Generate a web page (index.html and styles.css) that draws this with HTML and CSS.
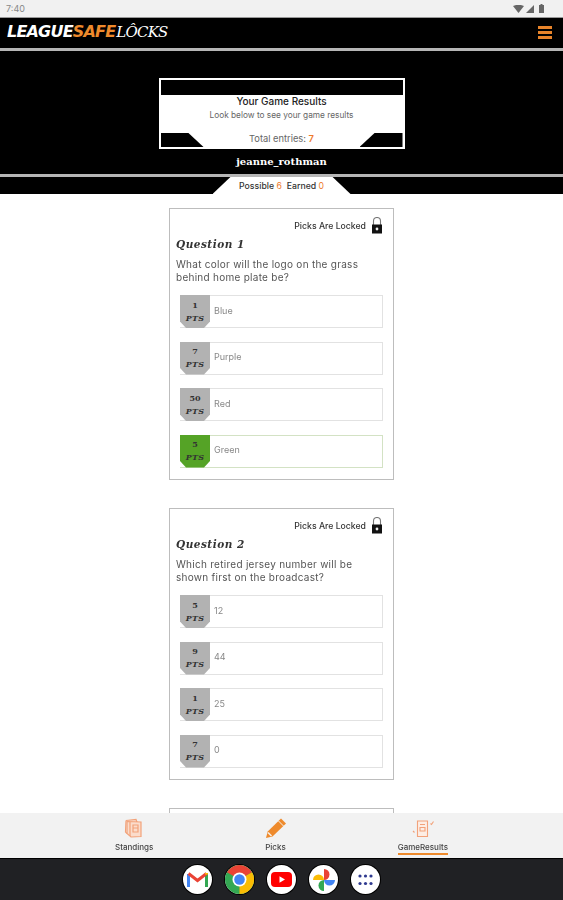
FILE: index.html
```html
<!DOCTYPE html>
<html lang="en">
<head>
<meta charset="utf-8">
<title>LeagueSafe Locks</title>
<link rel="stylesheet" href="styles.css">
</head>
<body>
<div class="app">
  <div class="status">
    <span class="time">7:40</span>
    <span class="status-icons">
      <svg width="11" height="8" viewBox="0 0 11 8"><path d="M0 1 Q5.500-1.500 11 1 L5.500 8Z" fill="#666"/></svg>
      <svg width="8" height="8" viewBox="0 0 8 8"><path d="M8 0V8H0Z" fill="#666"/></svg>
      <svg class="batt" width="5" height="9" viewBox="0 0 5 9"><path d="M1.500 0H3.500V1H5V9H0V1H1.500Z" fill="#666"/></svg>
    </span>
  </div>
  <header class="topbar">
    <div class="logo"><span class="logo-a">LEAGUE</span><span class="logo-b">SAFE</span><span class="logo-c">LÔCKS</span></div>
    <div class="burger"><i></i><i></i><i></i></div>
  </header>
  <section class="hero">
    <div class="hero-card">
      <div class="hero-band"></div>
      <div class="hero-title">Your Game Results</div>
      <div class="hero-sub">Look below to see your game results</div>
      <div class="hero-total">Total entries: <b>7</b></div>
      <span class="corner corner-l"></span>
      <span class="corner corner-r"></span>
    </div>
    <div class="hero-name">jeanne_rothman</div>
  </section>
  <div class="tabband">
    <div class="tab"><span>Possible <em>6</em></span><span>Earned <em>0</em></span></div>
  </div>
  <main class="content">
    <article class="qcard">
      <div class="locked"><span>Picks Are Locked</span>
        <svg width="12" height="17" viewBox="0 0 12 17"><path d="M2.500 8V4a3.500 3.500 0 0 1 7 0v4" fill="none" stroke="#777" stroke-width="1.100"/><rect x="1" y="7.500" width="10" height="9" fill="#111"/><circle cx="6" cy="12" r="1.400" fill="#eee"/></svg>
      </div>
      <h2 class="qtitle">Question 1</h2>
      <p class="qtext">What color will the logo on the grass behind home plate be?</p>
      <div class="opt"><div class="badge"><b>1</b><i>PTS</i></div><span>Blue</span></div>
      <div class="opt"><div class="badge"><b>7</b><i>PTS</i></div><span>Purple</span></div>
      <div class="opt"><div class="badge"><b>50</b><i>PTS</i></div><span>Red</span></div>
      <div class="opt opt-right"><div class="badge"><b>5</b><i>PTS</i></div><span>Green</span></div>
    </article>
    <article class="qcard">
      <div class="locked"><span>Picks Are Locked</span>
        <svg width="12" height="17" viewBox="0 0 12 17"><path d="M2.500 8V4a3.500 3.500 0 0 1 7 0v4" fill="none" stroke="#777" stroke-width="1.100"/><rect x="1" y="7.500" width="10" height="9" fill="#111"/><circle cx="6" cy="12" r="1.400" fill="#eee"/></svg>
      </div>
      <h2 class="qtitle">Question 2</h2>
      <p class="qtext">Which retired jersey number will be shown first on the broadcast?</p>
      <div class="opt"><div class="badge"><b>5</b><i>PTS</i></div><span>12</span></div>
      <div class="opt"><div class="badge"><b>9</b><i>PTS</i></div><span>44</span></div>
      <div class="opt"><div class="badge"><b>1</b><i>PTS</i></div><span>25</span></div>
      <div class="opt"><div class="badge"><b>7</b><i>PTS</i></div><span>0</span></div>
    </article>
    <article class="qcard"></article>
  </main>
  <nav class="bottomnav">
    <div class="navitem">
      <svg width="22" height="22" viewBox="0 0 22 22" fill="none" stroke="#f2a27a" stroke-width="1.200"><path d="M3 3.500L13 2.500 14 5M4 4.500V16.500L8 20 18 19.500V5L4 4.500Z" fill="#fbdccb"/><path d="M7 5V19M10 8H15V15H10ZM10 11H15M3 3.500L2.500 15 4 16.500"/></svg>
      <span>Standings</span>
    </div>
    <div class="navitem">
      <svg width="22" height="22" viewBox="0 0 22 22"><path d="M16 1.500L21 6.500 7.500 19.500 1 21 2.700 14.500Z" fill="#ee8a2c"/><path d="M13.500 4L18.500 9" stroke="#f2f2f2" stroke-width="1"/><path d="M3 15.500L6.500 19" stroke="#f8f0e6" stroke-width="1.600"/></svg>
      <span>Picks</span>
    </div>
    <div class="navitem navitem-on">
      <svg width="24" height="22" viewBox="0 0 24 22" fill="none" stroke="#f2a27a" stroke-width="1.100"><path d="M6.500 4H16.500V19.500H6.500Z" fill="#fdeee5"/><path d="M9 7.500H14M9 10.500H14V14H9Z"/><path d="M19.500 6.500L20.500 7.500 22.500 4.500M2 14L3.500 15.500"/></svg>
      <span>GameResults</span>
    </div>
  </nav>
  <div class="dock">
    <div class="dockapp">
      <svg width="21" height="17" viewBox="0 0 21 17" fill="none"><path d="M1.500 16V3" stroke="#4285f4" stroke-width="3"/><path d="M19.500 16V3" stroke="#34a853" stroke-width="3"/><path d="M1.500 2.500L10.500 9.500 19.500 2.500" stroke="#ea4335" stroke-width="3"/><path d="M19.500 3.500V2" stroke="#fbbc04" stroke-width="3"/></svg>
    </div>
    <div class="dockapp">
      <svg width="29" height="29" viewBox="0 0 29 29"><circle cx="14.500" cy="14.500" r="14.500" fill="#34a853"/><path d="M14.500 14.500L2 7.200A14.500 14.500 0 0 1 27 7.200Z" fill="#ea4335"/><path d="M14.500 14.500L27 7.200A14.500 14.500 0 0 1 14.500 29Z" fill="#fbbc04"/><circle cx="14.500" cy="14.500" r="7" fill="#fff"/><circle cx="14.500" cy="14.500" r="5.300" fill="#4285f4"/></svg>
    </div>
    <div class="dockapp">
      <svg width="21" height="15" viewBox="0 0 21 15"><rect width="21" height="15" rx="4" fill="#f00"/><path d="M8.500 4.200L14 7.500 8.500 10.800Z" fill="#fff"/></svg>
    </div>
    <div class="dockapp">
      <svg width="22" height="22" viewBox="0 0 22 22"><path d="M0 11A5.500 5.500 0 0 1 11 11Z" fill="#fbbc04"/><path d="M11 0A5.500 5.500 0 0 1 11 11Z" fill="#ea4335"/><path d="M22 11A5.500 5.500 0 0 1 11 11Z" fill="#4285f4"/><path d="M11 22A5.500 5.500 0 0 1 11 11Z" fill="#34a853"/></svg>
    </div>
    <div class="dockapp">
      <svg width="15" height="12" viewBox="0 0 15 12" fill="#2f3a8f"><circle cx="2" cy="2" r="1.600"/><circle cx="7.500" cy="2" r="1.600"/><circle cx="13" cy="2" r="1.600"/><circle cx="2" cy="9.500" r="1.600"/><circle cx="7.500" cy="9.500" r="1.600"/><circle cx="13" cy="9.500" r="1.600"/></svg>
    </div>
  </div>
</div>
</body>
</html>
```
FILE: styles.css
```css
* { box-sizing: border-box; }
html, body { margin: 0; padding: 0; height: 100%; overflow: hidden; }
body { font-family: Inter, "Liberation Sans", sans-serif; background: #fff; color: #222; }
.app { width: 563px; height: 900px; display: flex; flex-direction: column; overflow: hidden; filter: blur(0.35px); }

.status { height: 18px; flex: none; background: #f1f1f1; border-bottom: 1px solid #999; display: flex; align-items: center; justify-content: space-between; padding: 0 19px 0 6px; }
.time { font-size: 9px; color: #888; }
.status-icons { display: flex; align-items: center; gap: 2px; }
.batt { margin-left: 3px; }

.topbar { height: 33px; flex: none; background: #000; border-bottom: 3px solid #b5b5b5; display: flex; align-items: center; justify-content: space-between; padding: 0 11px 2px 7px; }
.logo { display: flex; align-items: baseline; font-size: 16px; line-height: 18px; font-style: italic; }
.logo-a, .logo-b { font-family: "DejaVu Sans", sans-serif; font-weight: 700; letter-spacing: -0.800px; }
.logo-a { color: #fff; }
.logo-b { color: #ee8a2c; }
.logo-c { font-family: "DejaVu Serif", serif; color: #fff; font-weight: 400; letter-spacing: -0.800px; margin-left: 1px; font-size: 15px; }
.burger { width: 14px; display: flex; flex-direction: column; gap: 2px; }
.burger i { display: block; height: 3px; background: #e8842a; }

.hero { flex: none; height: 126px; background: #000; padding-top: 27px; display: flex; flex-direction: column; align-items: center; border-bottom: 3px solid #b5b5b5; }
.hero-card { position: relative; width: 246px; height: 71px; background: #fff; border: 2px solid #fff; display: flex; flex-direction: column; align-items: center; }
.hero-band { align-self: stretch; height: 15px; background: #000; flex: none; }
.hero-title { font-size: 10px; font-weight: 500; line-height: 12px; margin-top: 0; color: #222; }
.hero-sub { font-size: 8.300px; line-height: 11px; margin-top: 3px; color: #666; }
.hero-total { font-size: 9.300px; line-height: 12px; margin-top: 12px; color: #666; }
.hero-total b { color: #ee7a2c; font-weight: 600; }
.corner { position: absolute; bottom: 0; width: 43px; height: 14px; background: #000; }
.corner-l { left: 0; clip-path: polygon(0 0, 65% 0, 100% 100%, 0 100%); }
.corner-r { right: 0; clip-path: polygon(35% 0, 100% 0, 100% 100%, 0 100%); }
.hero-name { margin-top: 6px; font-family: "DejaVu Serif", serif; font-weight: 700; font-size: 10px; line-height: 14px; color: #fff; }

.tabband { flex: none; height: 17px; background: #000; display: flex; justify-content: center; }
.tab { width: 138px; height: 17px; background: #fff; clip-path: polygon(13% 0, 87% 0, 100% 100%, 0 100%); display: flex; justify-content: center; align-items: center; gap: 5px; font-size: 8.700px; font-weight: 500; color: #333; }
.tab em { font-style: normal; font-weight: 400; color: #ee7a2c; }

.content { flex: 1; min-height: 0; overflow: hidden; display: flex; flex-direction: column; align-items: center; gap: 28px; padding-top: 14px; }
.qcard { flex: none; width: 225px; height: 272px; border: 1.500px solid #bdbdbd; padding: 8px 10px 0 6px; }
.locked { display: flex; justify-content: flex-end; align-items: center; gap: 5px; height: 17px; font-size: 8.700px; font-weight: 500; color: #333; }
.qtitle { margin: 3px 0 0; font-family: "DejaVu Serif", serif; font-style: italic; font-weight: 700; font-size: 10.500px; line-height: 14px; letter-spacing: 0.500px; color: #333; }
.qtext { margin: 7px 0 0; font-size: 10px; line-height: 12.500px; letter-spacing: 0.270px; color: #555; }
.opt { display: flex; align-items: center; height: 33px; margin: 0 0 13.500px 4px; width: 203px; border: 1.500px solid #e2e2e2; border-left: 0; }
.qtext + .opt { margin-top: 12px; }
.badge { width: 30px; height: 33px; flex: none; background: #b2b2b2; clip-path: polygon(0 0, 100% 0, 100% 80%, 80% 100%, 20% 100%, 0 80%); display: flex; flex-direction: column; align-items: center; justify-content: center; font-family: "DejaVu Serif", serif; font-weight: 700; font-size: 8px; line-height: 13px; color: #333; }
.badge i { font-size: 8px; letter-spacing: 0.300px; }
.opt span { margin-left: 4px; padding-bottom: 3px; font-size: 9px; color: #888; }
.opt-right { border-color: #d3e2c4; }
.opt-right .badge { background: #55a326; }

.bottomnav { flex: none; height: 45px; background: #f2f2f2; display: flex; justify-content: space-between; padding: 4px 0 0; }
.navitem { display: flex; flex-direction: column; align-items: center; font-size: 8px; font-weight: 500; color: #444; line-height: 10px; height: 41px; }
.navitem:nth-child(1) { margin-left: 115px; }
.navitem:nth-child(3) { margin-right: 115px; }
.navitem span { margin-top: 3px; }
.navitem-on span { border-bottom: 2px solid #ee8a2c; padding-bottom: 1px; }

.dock { flex: none; height: 42px; background: #202124; border-top: 1px solid #000; display: flex; justify-content: center; align-items: center; gap: 13px; }
.dockapp { width: 29px; height: 29px; border-radius: 50%; background: #fff; display: flex; align-items: center; justify-content: center; box-shadow: 0 0 0 1px #000; }
```
